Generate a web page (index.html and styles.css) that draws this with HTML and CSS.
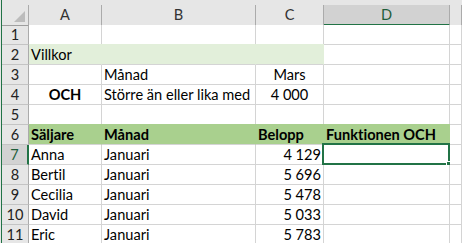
FILE: index.html
```html
<!DOCTYPE html>
<html lang="sv">
<head>
    <meta charset="UTF-8">
    <meta name="viewport" content="width=device-width, initial-scale=1.0">
    <title>Funktionen OCH</title>
    <link rel="stylesheet" href="styles.css">
</head>

<body>
    <div class="sheet">
        <!-- column letters -->
        <div class="row head-row">
            <div class="corner"><span class="corner-mark"></span></div>
            <div class="col-head">A</div>
            <div class="col-head">B</div>
            <div class="col-head">C</div>
            <div class="col-head active">D</div>
            <div class="col-head"></div>
        </div>

        <div class="row">
            <div class="row-head">1</div>
            <div class="cell"></div>
            <div class="cell"></div>
            <div class="cell"></div>
            <div class="cell"></div>
            <div class="cell"></div>
        </div>

        <div class="row">
            <div class="row-head">2</div>
            <div class="cell light">Villkor</div>
            <div class="cell light"></div>
            <div class="cell light"></div>
            <div class="cell"></div>
            <div class="cell"></div>
        </div>

        <div class="row">
            <div class="row-head">3</div>
            <div class="cell"></div>
            <div class="cell">Månad</div>
            <div class="cell center">Mars</div>
            <div class="cell"></div>
            <div class="cell"></div>
        </div>

        <div class="row">
            <div class="row-head">4</div>
            <div class="cell center bold">OCH</div>
            <div class="cell">Större än eller lika med</div>
            <div class="cell center">4 000</div>
            <div class="cell"></div>
            <div class="cell"></div>
        </div>

        <div class="row">
            <div class="row-head">5</div>
            <div class="cell"></div>
            <div class="cell"></div>
            <div class="cell"></div>
            <div class="cell"></div>
            <div class="cell"></div>
        </div>

        <div class="row">
            <div class="row-head">6</div>
            <div class="cell dark bold">Säljare</div>
            <div class="cell dark bold">Månad</div>
            <div class="cell dark bold">Belopp</div>
            <div class="cell dark bold">Funktionen OCH</div>
            <div class="cell"></div>
        </div>

        <div class="row">
            <div class="row-head active">7</div>
            <div class="cell">Anna</div>
            <div class="cell">Januari</div>
            <div class="cell num">4 129</div>
            <div class="cell selected"><span class="selection"><span class="handle"></span></span></div>
            <div class="cell"></div>
        </div>

        <div class="row">
            <div class="row-head">8</div>
            <div class="cell">Bertil</div>
            <div class="cell">Januari</div>
            <div class="cell num">5 696</div>
            <div class="cell"></div>
            <div class="cell"></div>
        </div>

        <div class="row">
            <div class="row-head">9</div>
            <div class="cell">Cecilia</div>
            <div class="cell">Januari</div>
            <div class="cell num">5 478</div>
            <div class="cell"></div>
            <div class="cell"></div>
        </div>

        <div class="row">
            <div class="row-head">10</div>
            <div class="cell">David</div>
            <div class="cell">Januari</div>
            <div class="cell num">5 033</div>
            <div class="cell"></div>
            <div class="cell"></div>
        </div>

        <div class="row">
            <div class="row-head">11</div>
            <div class="cell">Eric</div>
            <div class="cell">Januari</div>
            <div class="cell num">5 783</div>
            <div class="cell"></div>
            <div class="cell"></div>
        </div>
    </div>
</body>
</html>
```

FILE: styles.css
```css
* {
    box-sizing: border-box;
}

body {
    margin: 0;
    background-color: #e6e6e6;
    overflow: hidden;
    font-family: Lato, "Liberation Sans", sans-serif;
    font-size: 14.6px;
    font-variant-ligatures: none;
    color: #000;
}

.sheet {
    margin-left: 1px;
    border-left: 1px solid #217346;
    height: 243px;
    overflow: hidden;
}

.row {
    display: grid;
    grid-template-columns: 27px 73px 154px 68px 126px 1fr;
    height: 20px;
}

/* column letters */
.head-row {
    height: 25px;
    padding-top: 5px;
    background-color: #e6e6e6;
}

.corner {
    position: relative;
    border-right: 1px solid #ababab;
    border-bottom: 1px solid #9e9e9e;
}

.corner-mark {
    position: absolute;
    right: 3px;
    bottom: 3px;
    width: 0;
    height: 0;
    border-left: 11px solid transparent;
    border-bottom: 11px solid #bcbcbc;
}

.col-head {
    border-right: 1px solid #ababab;
    border-bottom: 1px solid #9e9e9e;
    text-align: center;
    line-height: 19px;
    color: #333;
}

.col-head.active {
    background-color: #d2d2d2;
    border-bottom: 2px solid #217346;
    color: #1e5e3a;
}

/* row numbers */
.row-head {
    background-color: #e6e6e6;
    border-right: 1px solid #ababab;
    border-bottom: 1px solid #c4c4c4;
    text-align: center;
    line-height: 19px;
    color: #222;
}

.row-head.active {
    background-color: #d2d2d2;
    border-right: 2px solid #217346;
    color: #1e5e3a;
}

.cell {
    position: relative;
    background-color: #fff;
    border-right: 1px solid #d4d4d4;
    border-bottom: 1px solid #d4d4d4;
    padding: 0 2px;
    line-height: 19px;
    white-space: nowrap;
}

.center {
    text-align: center;
}

.num {
    text-align: right;
}

.bold {
    font-weight: bold;
}

.light {
    background-color: #e2efda;
    border-right-color: #e2efda;
    box-shadow: 0 -1px 0 #e2efda;
}

.dark {
    background-color: #a9d08e;
    border-right-color: #a9d08e;
    box-shadow: 0 -1px 0 #a9d08e;
}

/* active cell frame */
.selection {
    position: absolute;
    left: -2px;
    top: -2px;
    right: -1px;
    bottom: -1px;
    border: 2px solid #217346;
}

.handle {
    position: absolute;
    right: -4px;
    bottom: -4px;
    width: 6px;
    height: 6px;
    background-color: #217346;
    border: 1px solid #fff;
}
```
